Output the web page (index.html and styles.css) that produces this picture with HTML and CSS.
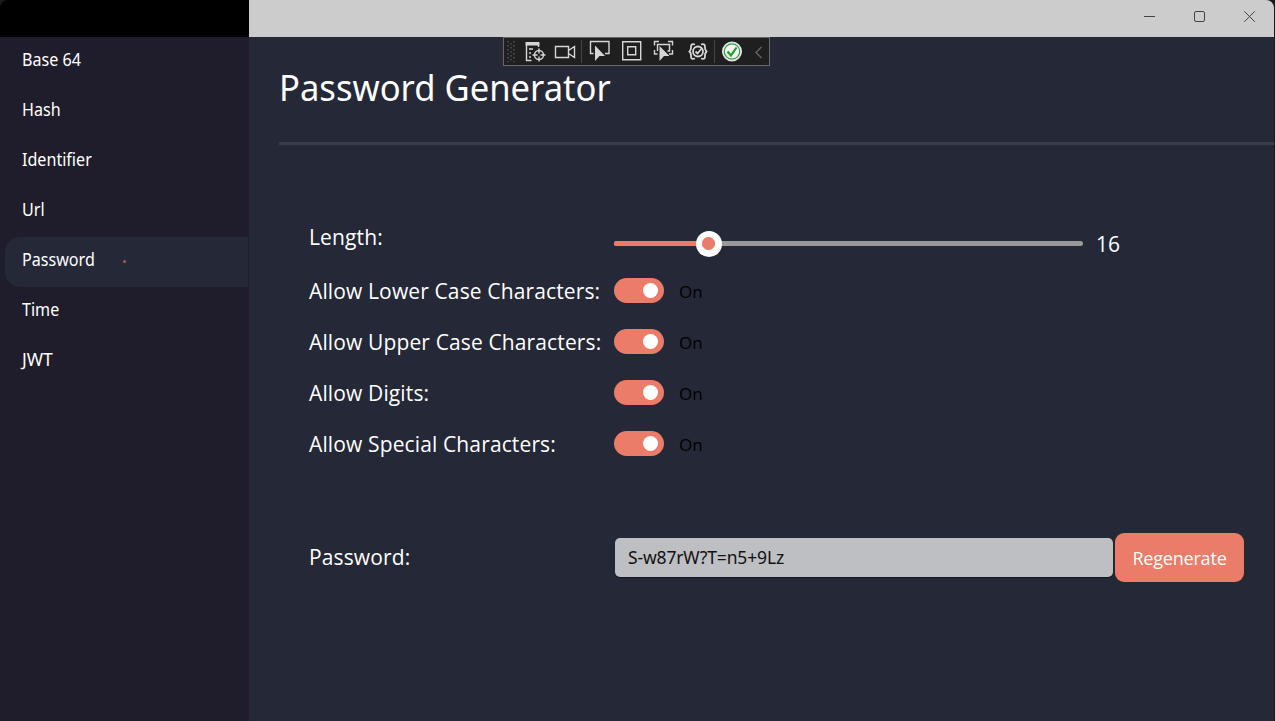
FILE: index.html
```html
<!DOCTYPE html>
<html lang="en">
<head>
<meta charset="utf-8">
<title>Password Generator</title>
<link rel="stylesheet" href="styles.css">
</head>
<body>
<div class="window">
  <aside class="sidebar">
    <div class="sidebar-cap"></div>
    <nav class="nav">
      <a class="nav-item"><span>Base 64</span></a>
      <a class="nav-item"><span>Hash</span></a>
      <a class="nav-item"><span>Identifier</span></a>
      <a class="nav-item"><span>Url</span></a>
      <a class="nav-item active"><span>Password</span><i class="dot"></i></a>
      <a class="nav-item"><span>Time</span></a>
      <a class="nav-item"><span class="wide">JWT</span></a>
    </nav>
  </aside>
  <div class="main">
    <header class="titlebar">
      <svg class="caption" width="130" height="16" viewBox="0 0 130 16" fill="none" stroke="#444" stroke-width="1">
        <path d="M4 8.500h11"/>
        <rect x="54.500" y="3.500" width="10" height="10" rx="1.500"/>
        <path d="M104.300 3.300l10.500 10.500M114.800 3.300L104.300 13.800"/>
      </svg>
    </header>
    <main class="content">
      <h1 class="title"><span>Password Generator</span></h1>
      <div class="form">
        <div class="row length">
          <label>Length:</label>
          <div class="slider"><div class="fill"></div><div class="thumb"></div></div>
          <span class="value">16</span>
        </div>
        <div class="row"><label>Allow Lower Case Characters:</label><div class="toggle"></div><span class="state">On</span></div>
        <div class="row"><label>Allow Upper Case Characters:</label><div class="toggle"></div><span class="state">On</span></div>
        <div class="row"><label>Allow Digits:</label><div class="toggle"></div><span class="state">On</span></div>
        <div class="row"><label>Allow Special Characters:</label><div class="toggle"></div><span class="state">On</span></div>
        <div class="row result">
          <label>Password:</label>
          <div class="output"><span>S-w87rW?T=n5+9Lz</span></div>
          <button class="regen">Regenerate</button>
        </div>
      </div>
    </main>
  </div>
  <div class="debugbar">
    <svg width="267" height="29" viewBox="0 0 267 29" fill="none" stroke="#d6d6d6" stroke-width="1.400">
      <g stroke="#555" stroke-width="1.500" stroke-dasharray="1.500 2.500">
        <path d="M5 4v21M11 4v21M8 6v18"/>
      </g>
      <path d="M78.500 3v23M211.500 3v23" stroke="#444" stroke-width="1"/>
      <path d="M22.500 5h14v3.500h-14z" fill="#d6d6d6" stroke="none"/>
      <path d="M23.500 8v15.500h5M26 12h4M26 16h2M26 20h2M35.500 8v2"/>
      <circle cx="36" cy="18" r="4.500"/><path d="M36 11.500v5M36 19.500v5M29.500 18h5M37.500 18h5"/>
      <path d="M52.500 9.500h13v11h-13zM65.500 13.500l6-4v11l-6-4"/>
      <path d="M90.500 16.500h-3v-12h18.500v12h-4"/>
      <path d="M92 8.500l10 10.500h-5.500l-4.500 5z" fill="#d6d6d6" stroke="none"/>
      <path d="M119.700 4.700h18v18h-18zM124.700 9.700h8v8h-8z"/>
      <path d="M151.500 8.500v-4h4.500M165 4.500h4.500v4M151.500 13v4h3M166 17h3.500v-4M154.500 14V7.500h12V14h-2"/>
      <path d="M156.500 9l10 10h-5.500l-4.500 5z" fill="#d6d6d6" stroke="none"/>
      <g stroke-width="1.800">
        <path d="M192 7.500c-4-1-4 1-4 3 0 2.500 0 2.500-1.500 4 1.500 1.500 1.500 1.500 1.500 4 0 2.500 0 4 4 3M198 7.500c4-1 4 1 4 3 0 2.500 0 2.500 1.500 4-1.500 1.500-1.500 1.500-1.500 4 0 2.500 0 4-4 3"/>
        <circle cx="195" cy="14.500" r="5"/><path d="M192.500 14.500l2 2 4.500-5.500"/>
      </g>
      <circle cx="229" cy="14.500" r="9.300" fill="#f4f4f4" stroke="#e5e5e5"/>
      <circle cx="229" cy="14.500" r="7.700" stroke="#339b3c" stroke-width="1.200"/>
      <path d="M224.500 14.500l3.500 4 5.500-8" stroke="#239a30" stroke-width="2.200"/>
      <path d="M258.500 10l-5.500 5.500 5.500 5.500" stroke="#666"/>
    </svg>
  </div>
</div>
</body>
</html>
```
FILE: styles.css
```css
* { box-sizing: border-box; }
body { margin: 0; background: #1a1a1a; font-family: "Open Sans", sans-serif; color: #fff; }
.window { position: relative; display: flex; width: 1274px; height: 721px; border-radius: 8px 8px 0 0; overflow: hidden; background: #252836; }
.sidebar { width: 249px; background: #1f1d2b; }
.sidebar-cap { height: 37px; background: #000; }
.nav { padding-left: 5px; }
.nav-item { display: flex; align-items: center; height: 50px; padding: 0 0 6px 17px; font: 17.500px/24px "Noto Sans", sans-serif; white-space: nowrap; }
.nav-item span { transform: scaleX(0.920); transform-origin: 0 50%; }
.nav-item .wide { transform: none; }
.nav-item.active { background: #252836; border-radius: 15px 0 0 15px; margin-right: 1px; }
.nav-item.active span { width: 73px; }
.dot { width: 3px; height: 3px; margin: 5px 0 0 28px; border-radius: 50%; background: #a85c55; }
.main { flex: 1; display: flex; flex-direction: column; }
.titlebar { height: 37px; background: #ccc; display: flex; justify-content: flex-end; padding: 8px 4px 0 0; }
.content { padding-left: 30px; }
.title { margin: 0; height: 108px; border-bottom: 3px solid #393c49; padding-top: 25px; font: 400 37px/50px "Noto Sans", sans-serif; white-space: nowrap; }
.title span { display: inline-block; transform: scaleX(0.935); transform-origin: 0 50%; }
.form { padding: 66px 30px 0 30px; }
.row { display: flex; align-items: center; height: 51px; }
.row label { width: 305px; font-size: 21px; line-height: 30px; letter-spacing: 0.130px; white-space: nowrap; }
.length { height: 54px; align-items: flex-start; padding-top: 11px; }
.slider { position: relative; width: 469px; height: 5px; margin-top: 19px; border-radius: 3px; background: #999; }
.fill { width: 95px; height: 5px; border-radius: 3px; background: #ea7c69; }
.thumb { position: absolute; left: 82px; top: -10px; width: 26px; height: 26px; border-radius: 50%; background: radial-gradient(circle at 12.500px 12.500px, #ea7c69 6px, #fff 7px); }
.value { margin: 7px 0 0 13px; font-size: 21px; line-height: 30px; }
.toggle { display: flex; align-items: center; justify-content: flex-end; width: 50px; height: 25px; padding-right: 6px; border-radius: 13px; background: #ea7c69; }
.toggle::after { content: ""; width: 15px; height: 15px; border-radius: 50%; background: #fff; }
.state { margin: 2px 0 0 15px; font-size: 17px; line-height: 24px; color: #000; }
.result { height: 52px; margin-top: 62px; }
.result label { padding-bottom: 1px; }
.output { width: 498px; height: 39px; margin: 1px 0 0 1px; padding: 0 13px; border-radius: 5px; background: #bebfc3; box-shadow: 0 1px 1px #15161e; color: #111; font: 17.500px/38px "Noto Sans", sans-serif; letter-spacing: -0.150px; white-space: nowrap; }
.regen { width: 129px; height: 49px; margin: 1px 0 0 2px; padding: 1px 0 0; border: 0; border-radius: 9px; background: #ea7c69; color: #fff; font: 18px/24px "Open Sans", sans-serif; letter-spacing: -0.200px; }
.debugbar { position: absolute; left: 503px; top: 37px; width: 267px; height: 29px; background: #1f1f1f; box-shadow: inset 0 0 0 1px #686868; }
```
